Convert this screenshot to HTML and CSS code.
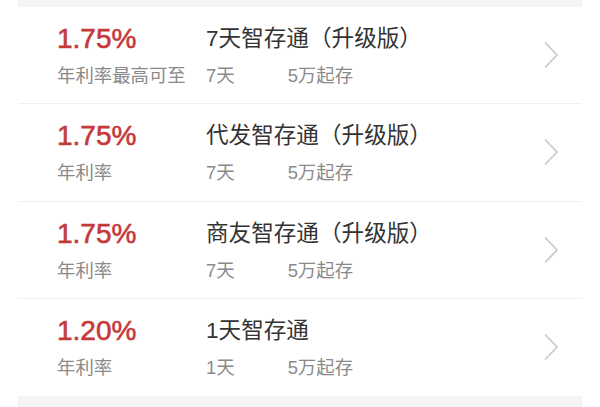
FILE: index.html
```html
<!DOCTYPE html>
<html lang="zh-CN">
<head>
<meta charset="utf-8">
<link rel="stylesheet" href="styles.css">
</head>
<body>
<div class="page">
  <div class="band top"></div>
  <div class="list">
    <div class="row">
      <div class="rate">
        <div class="num">1.75%</div>
        <div class="sub">年利率最高可至</div>
      </div>
      <div class="info">
        <div class="title">7天智存通（升级版）</div>
        <div class="sub"><span class="term">7天</span><span>5万起存</span></div>
      </div>
      <svg class="chev" width="16" height="28" viewBox="0 0 16 28"><path d="M2 1.5 L14 14 L2 26.5" fill="none" stroke="#cbcbcb" stroke-width="1.8"/></svg>
    </div>
    <div class="row">
      <div class="rate">
        <div class="num">1.75%</div>
        <div class="sub">年利率</div>
      </div>
      <div class="info">
        <div class="title">代发智存通（升级版）</div>
        <div class="sub"><span class="term">7天</span><span>5万起存</span></div>
      </div>
      <svg class="chev" width="16" height="28" viewBox="0 0 16 28"><path d="M2 1.5 L14 14 L2 26.5" fill="none" stroke="#cbcbcb" stroke-width="1.8"/></svg>
    </div>
    <div class="row">
      <div class="rate">
        <div class="num">1.75%</div>
        <div class="sub">年利率</div>
      </div>
      <div class="info">
        <div class="title">商友智存通（升级版）</div>
        <div class="sub"><span class="term">7天</span><span>5万起存</span></div>
      </div>
      <svg class="chev" width="16" height="28" viewBox="0 0 16 28"><path d="M2 1.5 L14 14 L2 26.5" fill="none" stroke="#cbcbcb" stroke-width="1.8"/></svg>
    </div>
    <div class="row last">
      <div class="rate">
        <div class="num">1.20%</div>
        <div class="sub">年利率</div>
      </div>
      <div class="info">
        <div class="title">1天智存通</div>
        <div class="sub"><span class="term">1天</span><span>5万起存</span></div>
      </div>
      <svg class="chev" width="16" height="28" viewBox="0 0 16 28"><path d="M2 1.5 L14 14 L2 26.5" fill="none" stroke="#cbcbcb" stroke-width="1.8"/></svg>
    </div>
  </div>
  <div class="band bottom"></div>
</div>
</body>
</html>
```

FILE: styles.css
```css
html, body {
  margin: 0;
  padding: 0;
  background: #ffffff;
}
body {
  font-family: "Liberation Sans", "Noto Sans CJK SC", sans-serif;
}
.page {
  width: 564px;
  margin: 0 18px;
  height: 407px;
  display: flex;
  flex-direction: column;
}
.band {
  background: #f4f4f4;
}
.band.top {
  height: 7px;
}
.band.bottom {
  flex: 1;
}
.list {
  background: #ffffff;
}
.row {
  box-sizing: border-box;
  height: 97.25px;
  border-bottom: 1px solid #efefef;
  display: flex;
  align-items: flex-start;
  padding: 15px 0 0 39px;
}
.row.last {
  border-bottom: none;
}
.rate {
  width: 149px;
  flex: none;
}
.info {
  flex: 1;
}
.num {
  font-size: 28px;
  line-height: 34px;
  height: 34px;
  color: #c43a3c;
  -webkit-text-stroke: 0.6px #c43a3c;
}
.title {
  font-size: 22.6px;
  line-height: 34px;
  height: 34px;
  color: #333333;
}
.sub {
  margin-top: 8px;
  font-size: 18.4px;
  line-height: 24px;
  color: #8a8a8a;
  white-space: nowrap;
}
.term {
  display: inline-block;
  margin-right: 53px;
}
.chev {
  align-self: center;
  margin: -15px 23px 0 0;
  flex: none;
}
```
